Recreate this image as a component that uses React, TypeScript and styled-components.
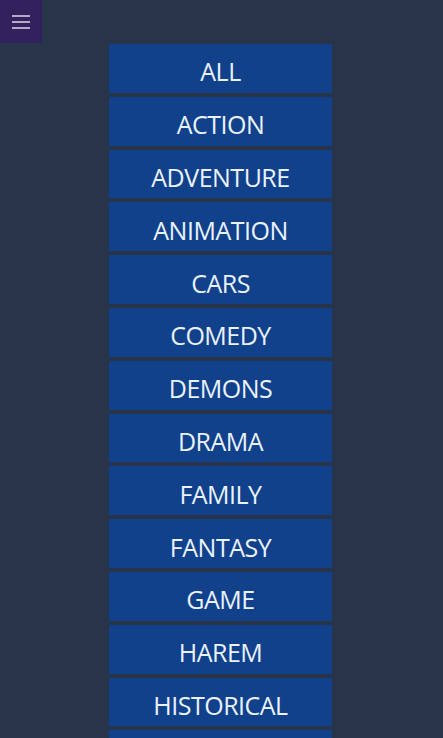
import React from 'react';
import styled, {createGlobalStyle} from 'styled-components';

const genres = [
  'ALL',
  'ACTION',
  'ADVENTURE',
  'ANIMATION',
  'CARS',
  'COMEDY',
  'DEMONS',
  'DRAMA',
  'FAMILY',
  'FANTASY',
  'GAME',
  'HAREM',
  'HISTORICAL',
  'HORROR',
];

const GlobalStyle = createGlobalStyle`
  html, body {
    margin: 0;
    padding: 0;
    height: 100%;
    overflow: hidden;
    background: #283449;
  }
  body {
    font-family: 'Open Sans', 'Noto Sans', sans-serif;
  }
`;

const Page = styled.div`
  position: relative;
  width: 443px;
  height: 738px;
  overflow: hidden;
  background: #283449;
`;

const MenuButton = styled.button`
  position: absolute;
  top: 0;
  left: 0;
  width: 42px;
  height: 43px;
  border: none;
  padding: 0;
  background: #32215d;
  display: flex;
  align-items: center;
  justify-content: center;
  cursor: pointer;
`;

const List = styled.div`
  display: flex;
  flex-direction: column;
  gap: 4px;
  width: 223px;
  margin: 0 0 0 109px;
  padding-top: 44px;
`;

const GenreButton = styled.button`
  height: 48.8px;
  flex-shrink: 0;
  border: none;
  background: #10418a;
  color: #eaf2ff;
  font-family: 'Open Sans', 'Noto Sans', sans-serif;
  font-size: 25px;
  letter-spacing: -0.5px;
  padding: 6px 0 0;
  display: flex;
  align-items: center;
  justify-content: center;
  cursor: pointer;
`;

const App: React.FC = () => (
  <>
    <GlobalStyle />
    <Page>
      <List>
        {genres.map(g => (
          <GenreButton key={g}>{g}</GenreButton>
        ))}
      </List>
      <MenuButton aria-label="menu">
        <svg width="18" height="14" viewBox="0 0 18 14">
          <g stroke="#e9e4f2" strokeWidth="1.4">
            <line x1="0" y1="1" x2="18" y2="1" />
            <line x1="0" y1="7" x2="18" y2="7" />
            <line x1="0" y1="13" x2="18" y2="13" />
          </g>
        </svg>
      </MenuButton>
    </Page>
  </>
);

export default App;
